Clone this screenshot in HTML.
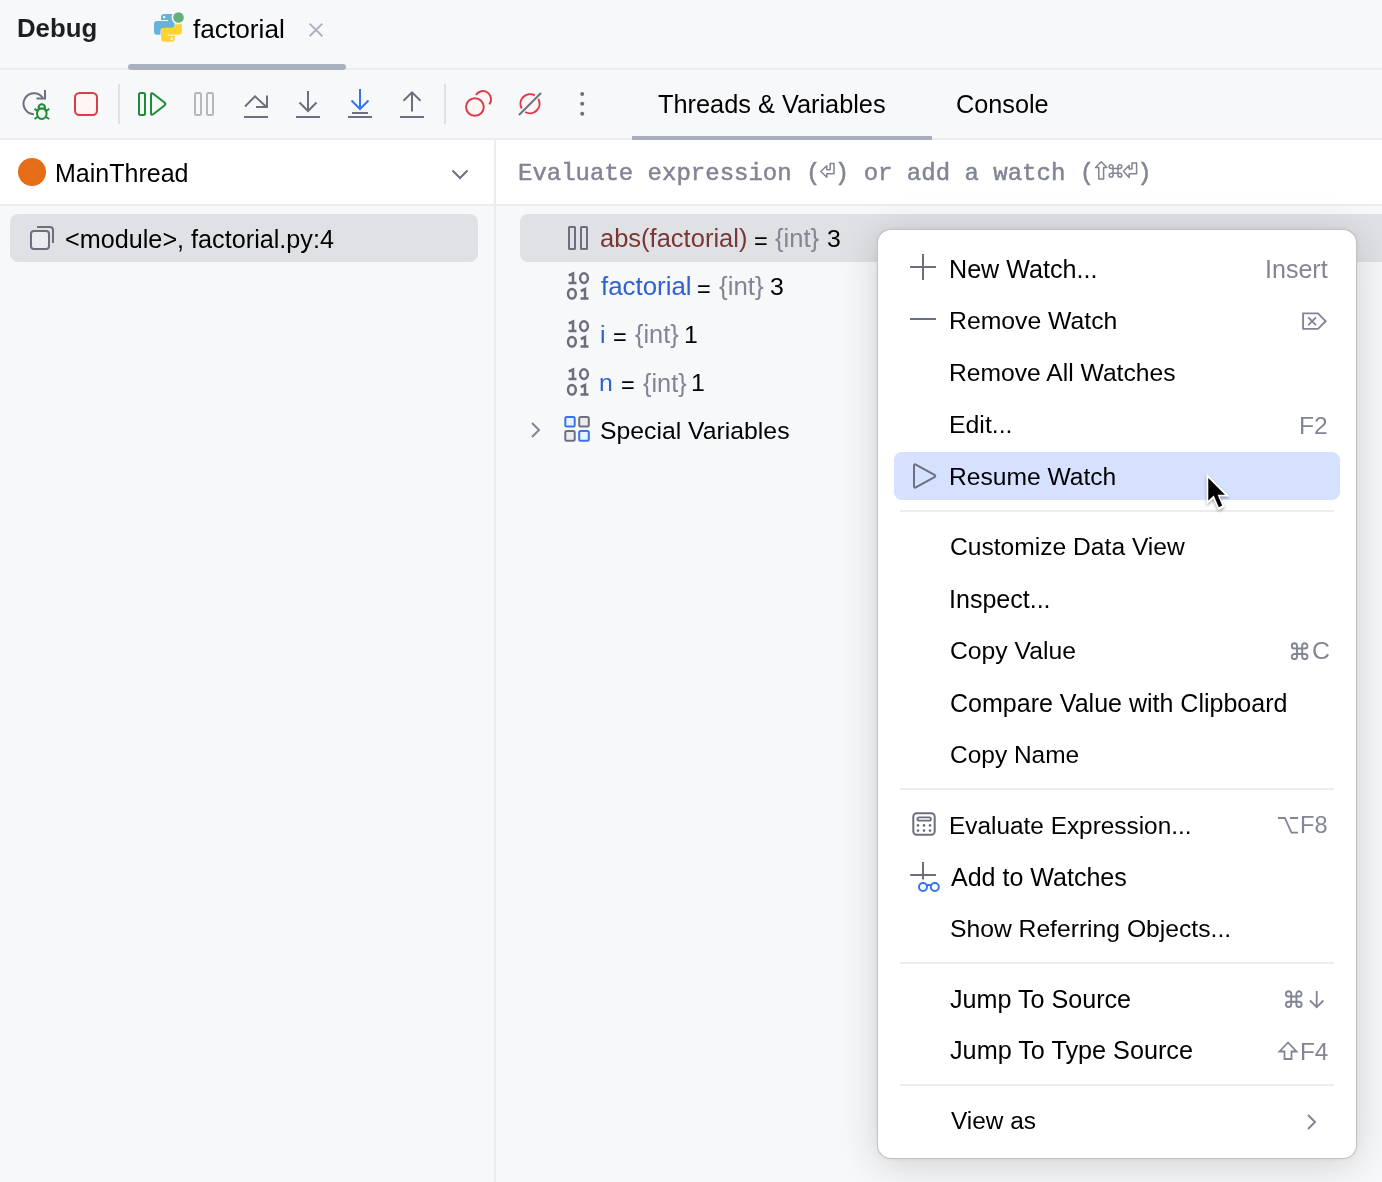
<!DOCTYPE html>
<html><head><meta charset="utf-8">
<style>
html,body{margin:0;padding:0;}
body{width:1382px;height:1182px;overflow:hidden;position:relative;background:#f7f8fa;font-family:"Liberation Sans",sans-serif;color:#000;}
.a{position:absolute;white-space:pre;line-height:1;will-change:transform;}
.b{position:absolute;}
svg.ov{position:absolute;left:0;top:0;}
</style></head>
<body>
<!-- header -->
<div class="b" style="left:0;top:68px;width:1382px;height:2px;background:#ebecf0"></div>
<div class="b" style="left:128px;top:64px;width:218px;height:6px;border-radius:3px;background:#abb0bf"></div>
<!-- toolbar bottom border -->
<div class="b" style="left:0;top:138px;width:1382px;height:2px;background:#ebecf0"></div>
<div class="b" style="left:632px;top:136px;width:300px;height:4px;background:#a8adbd"></div>
<div class="b" style="left:118px;top:84px;width:2px;height:40px;background:#dfe1e5"></div>
<div class="b" style="left:444px;top:84px;width:2px;height:40px;background:#dfe1e5"></div>
<!-- left panel -->
<div class="b" style="left:0;top:140px;width:494px;height:64px;background:#fff"></div>
<div class="b" style="left:0;top:204px;width:494px;height:2px;background:#ebecf0"></div>
<div class="b" style="left:494px;top:140px;width:2px;height:1042px;background:#ebecf0"></div>
<div class="b" style="left:18px;top:158px;width:28px;height:28px;border-radius:50%;background:#e66d17"></div>
<div class="b" style="left:10px;top:214px;width:468px;height:48px;border-radius:8px;background:#dfe1e5"></div>
<!-- right panel -->
<div class="b" style="left:496px;top:140px;width:886px;height:64px;background:#fff"></div>
<div class="b" style="left:496px;top:204px;width:886px;height:2px;background:#ebecf0"></div>
<div class="b" style="left:520px;top:214px;width:880px;height:48px;border-radius:8px;background:#dfe1e5"></div>
<!--TEXT-PRE-->
<!-- popup -->
<div class="b" id="popup" style="left:877px;top:229px;width:478px;height:928px;border-radius:14px;background:#fff;border:1px solid rgba(0,0,0,0.24);box-shadow:0 0 4px rgba(0,0,0,0.06),0 6px 40px rgba(0,0,0,0.16)"></div>
<div class="b" style="left:894px;top:452px;width:446px;height:48px;border-radius:8px;background:#d5e1ff"></div>
<div class="b" style="left:900px;top:510px;width:434px;height:2px;background:#ebecf0"></div>
<div class="b" style="left:900px;top:788px;width:434px;height:2px;background:#ebecf0"></div>
<div class="b" style="left:900px;top:962px;width:434px;height:2px;background:#ebecf0"></div>
<div class="b" style="left:900px;top:1084px;width:434px;height:2px;background:#ebecf0"></div>
<div class="a" id="t0" style="left:16.70px;top:16.46px;font-size:25.79px;color:#1e1f22;font-family:'Liberation Sans',sans-serif;font-weight:700">Debug</div>
<div class="a" id="t1" style="left:192.90px;top:15.99px;font-size:26.23px;color:#000000;font-family:'Liberation Sans',sans-serif;font-weight:400">factorial</div>
<div class="a" id="t2" style="left:658.10px;top:92.25px;font-size:25.33px;color:#000000;font-family:'Liberation Sans',sans-serif;font-weight:400">Threads &amp; Variables</div>
<div class="a" id="t3" style="left:956.10px;top:92.32px;font-size:25.26px;color:#000000;font-family:'Liberation Sans',sans-serif;font-weight:400">Console</div>
<div class="a" id="t4" style="left:55.30px;top:161.21px;font-size:25.02px;color:#000000;font-family:'Liberation Sans',sans-serif;font-weight:400">MainThread</div>
<div class="a" id="t5" style="left:65.10px;top:226.66px;font-size:25.21px;color:#000000;font-family:'Liberation Sans',sans-serif;font-weight:400">&lt;module&gt;, factorial.py:4</div>
<div class="a" id="t6" style="left:599.70px;top:226.30px;font-size:25.51px;color:#7c3535;font-family:'Liberation Sans',sans-serif;font-weight:400">abs(factorial)</div>
<div class="a" id="t7" style="left:754.04px;top:229.50px;font-size:23.50px;color:#000000;font-family:'Liberation Sans',sans-serif;font-weight:400">=</div>
<div class="a" id="t8" style="left:775.30px;top:226.29px;font-size:25.52px;color:#818594;font-family:'Liberation Sans',sans-serif;font-weight:400">{int}</div>
<div class="a" id="t9" style="left:827.01px;top:226.90px;font-size:24.80px;color:#000000;font-family:'Liberation Sans',sans-serif;font-weight:400">3</div>
<div class="a" id="t10" style="left:600.70px;top:273.98px;font-size:25.89px;color:#2e62d1;font-family:'Liberation Sans',sans-serif;font-weight:400">factorial</div>
<div class="a" id="t11" style="left:697.04px;top:277.50px;font-size:23.50px;color:#000000;font-family:'Liberation Sans',sans-serif;font-weight:400">=</div>
<div class="a" id="t12" style="left:718.90px;top:273.99px;font-size:25.88px;color:#818594;font-family:'Liberation Sans',sans-serif;font-weight:400">{int}</div>
<div class="a" id="t13" style="left:770.41px;top:274.90px;font-size:24.80px;color:#000000;font-family:'Liberation Sans',sans-serif;font-weight:400">3</div>
<div class="a" id="t14" style="left:599.95px;top:322.90px;font-size:24.80px;color:#2e62d1;font-family:'Liberation Sans',sans-serif;font-weight:400">i</div>
<div class="a" id="t15" style="left:613.04px;top:325.50px;font-size:23.50px;color:#000000;font-family:'Liberation Sans',sans-serif;font-weight:400">=</div>
<div class="a" id="t16" style="left:634.90px;top:322.48px;font-size:25.30px;color:#818594;font-family:'Liberation Sans',sans-serif;font-weight:400">{int}</div>
<div class="a" id="t17" style="left:683.91px;top:322.90px;font-size:24.80px;color:#000000;font-family:'Liberation Sans',sans-serif;font-weight:400">1</div>
<div class="a" id="t18" style="left:599.41px;top:371.10px;font-size:24.80px;color:#2e62d1;font-family:'Liberation Sans',sans-serif;font-weight:400">n</div>
<div class="a" id="t19" style="left:621.24px;top:373.70px;font-size:23.50px;color:#000000;font-family:'Liberation Sans',sans-serif;font-weight:400">=</div>
<div class="a" id="t20" style="left:643.10px;top:370.68px;font-size:25.30px;color:#818594;font-family:'Liberation Sans',sans-serif;font-weight:400">{int}</div>
<div class="a" id="t21" style="left:691.31px;top:371.10px;font-size:24.80px;color:#000000;font-family:'Liberation Sans',sans-serif;font-weight:400">1</div>
<div class="a" id="t22" style="left:600.10px;top:419.12px;font-size:24.78px;color:#000000;font-family:'Liberation Sans',sans-serif;font-weight:400">Special Variables</div>
<div class="a" id="t23" style="left:949.10px;top:257.02px;font-size:25.14px;color:#000000;font-family:'Liberation Sans',sans-serif;font-weight:400">New Watch...</div>
<div class="a" id="t24" style="left:949.10px;top:309.31px;font-size:24.78px;color:#000000;font-family:'Liberation Sans',sans-serif;font-weight:400">Remove Watch</div>
<div class="a" id="t25" style="left:949.10px;top:361.42px;font-size:24.66px;color:#000000;font-family:'Liberation Sans',sans-serif;font-weight:400">Remove All Watches</div>
<div class="a" id="t26" style="left:949.10px;top:413.27px;font-size:24.84px;color:#000000;font-family:'Liberation Sans',sans-serif;font-weight:400">Edit...</div>
<div class="a" id="t27" style="left:949.10px;top:465.46px;font-size:24.61px;color:#000000;font-family:'Liberation Sans',sans-serif;font-weight:400">Resume Watch</div>
<div class="a" id="t28" style="left:950.10px;top:534.95px;font-size:24.62px;color:#000000;font-family:'Liberation Sans',sans-serif;font-weight:400">Customize Data View</div>
<div class="a" id="t29" style="left:949.10px;top:587.10px;font-size:25.04px;color:#000000;font-family:'Liberation Sans',sans-serif;font-weight:400">Inspect...</div>
<div class="a" id="t30" style="left:950.10px;top:638.86px;font-size:24.73px;color:#000000;font-family:'Liberation Sans',sans-serif;font-weight:400">Copy Value</div>
<div class="a" id="t31" style="left:950.10px;top:690.92px;font-size:25.02px;color:#000000;font-family:'Liberation Sans',sans-serif;font-weight:400">Compare Value with Clipboard</div>
<div class="a" id="t32" style="left:950.10px;top:743.08px;font-size:24.48px;color:#000000;font-family:'Liberation Sans',sans-serif;font-weight:400">Copy Name</div>
<div class="a" id="t33" style="left:949.10px;top:813.65px;font-size:24.39px;color:#000000;font-family:'Liberation Sans',sans-serif;font-weight:400">Evaluate Expression...</div>
<div class="a" id="t34" style="left:951.10px;top:865.10px;font-size:25.04px;color:#000000;font-family:'Liberation Sans',sans-serif;font-weight:400">Add to Watches</div>
<div class="a" id="t35" style="left:950.10px;top:917.40px;font-size:24.68px;color:#000000;font-family:'Liberation Sans',sans-serif;font-weight:400">Show Referring Objects...</div>
<div class="a" id="t36" style="left:950.10px;top:986.51px;font-size:25.14px;color:#000000;font-family:'Liberation Sans',sans-serif;font-weight:400">Jump To Source</div>
<div class="a" id="t37" style="left:950.10px;top:1038.44px;font-size:25.22px;color:#000000;font-family:'Liberation Sans',sans-serif;font-weight:400">Jump To Type Source</div>
<div class="a" id="t38" style="left:951.10px;top:1109.13px;font-size:24.41px;color:#000000;font-family:'Liberation Sans',sans-serif;font-weight:400">View as</div>
<div class="a" id="t39" style="left:1265.30px;top:257.07px;font-size:25.07px;color:#818594;font-family:'Liberation Sans',sans-serif;font-weight:400">Insert</div>
<div class="a" id="t40" style="left:1299.10px;top:413.51px;font-size:24.55px;color:#818594;font-family:'Liberation Sans',sans-serif;font-weight:400">F2</div>
<div class="a" id="t41" style="left:1311.85px;top:639.30px;font-size:24.80px;color:#818594;font-family:'Liberation Sans',sans-serif;font-weight:400">C</div>
<div class="a" id="t42" style="left:1300.30px;top:814.04px;font-size:23.57px;color:#818594;font-family:'Liberation Sans',sans-serif;font-weight:400">F8</div>
<div class="a" id="t43" style="left:1299.70px;top:1039.58px;font-size:24.24px;color:#818594;font-family:'Liberation Sans',sans-serif;font-weight:400">F4</div>
<div class="a" id="t44" style="left:517.65px;top:161.51px;font-size:24.00px;color:#818594;font-family:'Liberation Mono',monospace;font-weight:400;-webkit-text-stroke:0.5px #818594">Evaluate expression ( ) or add a watch (   )</div>
<svg class="ov" width="1382" height="1182" viewBox="0 0 1382 1182" fill="none" stroke-width="2">
<!-- python icon -->
<g>
<path id="py" d="M161,17 Q161,14 164,14 H171.7 Q174.7,14 174.7,17 V25 Q174.7,28 171.7,28 H163.5 Q160.5,28 160.5,31 V34.7 H157 Q154,34.7 154,31.7 V24 Q154,21 157,21 H168 V20 H161 Z" fill="#69b1d9" stroke="none"/>
<path d="M161,17 Q161,14 164,14 H171.7 Q174.7,14 174.7,17 V25 Q174.7,28 171.7,28 H163.5 Q160.5,28 160.5,31 V34.7 H157 Q154,34.7 154,31.7 V24 Q154,21 157,21 H168 V20 H161 Z" fill="#fed434" stroke="none" transform="rotate(180 167.9 27.9)"/>
<circle cx="164.1" cy="17.1" r="1.2" fill="#fff" stroke="none"/>
<circle cx="171.7" cy="38.7" r="1.2" fill="#fff" stroke="none"/>
<circle cx="178.5" cy="17.5" r="6.1" fill="#65b07a" stroke="#f7f8fa" stroke-width="1.6"/>
</g>
<!-- close x -->
<path d="M309.6,23.6 L322.3,36.3 M322.3,23.6 L309.6,36.3" stroke="#aeb3c2" stroke-width="2"/>

<!-- toolbar: rerun -->
<path d="M33.9,114.2 A10.5,10.5 0 1 1 42.6,97.6" stroke="#6c707e"/>
<path d="M36.5,98.5 H45 V90" stroke="#6c707e"/>
<g stroke="#208a3c">
<ellipse cx="41.8" cy="113.6" rx="4.8" ry="5.4" fill="#ecf7ee"/>
<path d="M38.6,108.6 V107.5 A3.2,3.2 0 0 1 45,107.5 V108.6 Z" fill="#ecf7ee"/>
<path d="M34.5,108.8 L37.6,110.8 M49.2,108.8 L46.1,110.8 M34.5,119 L37.6,117 M49.2,119 L46.1,117"/>
</g>
<!-- stop -->
<rect x="75" y="93" width="22" height="22" rx="4.5" stroke="#db3b4b" fill="#fff5f5"/>
<!-- resume -->
<rect x="139" y="93" width="6" height="22" rx="1.5" stroke="#208a3c" fill="#f2fbf3"/>
<path d="M151,95 Q151,92 153.5,94 L164.5,102.5 Q166,104 164.5,105.5 L153.5,114 Q151,116 151,113 Z" stroke="#208a3c" fill="#f2fbf3" stroke-linejoin="round"/>
<!-- pause (disabled) -->
<rect x="195" y="93" width="6" height="22" rx="1.5" stroke="#b8b8b8"/>
<rect x="207" y="93" width="6" height="22" rx="1.5" stroke="#b8b8b8"/>
<!-- step over -->
<g stroke="#6c707e">
<path d="M245,106.5 L255,96.3 L266.5,107"/>
<path d="M256,107 H267 V95.5"/>
<path d="M244,117 H268"/>
</g>
<!-- step into -->
<g stroke="#6c707e">
<path d="M308,91 V111"/>
<path d="M299.5,102.5 L308,111 L316.5,102.5"/>
<path d="M296,117 H320"/>
</g>
<!-- step into my code -->
<g stroke="#3574f0">
<path d="M360,89 V109"/>
<path d="M351.5,100.5 L360,109 L368.5,100.5"/>
</g>
<path d="M352,113 H368 M348,117 H372" stroke="#6c707e"/>
<!-- step out -->
<g stroke="#6c707e">
<path d="M412,92.5 V111.5"/>
<path d="M403.5,100.8 L412,92.3 L420.5,100.8"/>
<path d="M400,117 H424"/>
</g>
<!-- view breakpoints -->
<g stroke="#db3b4b" fill="#fff5f5">
<path d="M475.9,94.9 A8.2,8.2 0 1 1 489.3,104.3"/>
<circle cx="474.9" cy="107" r="8.85"/>
</g>
<!-- mute breakpoints -->
<circle cx="530" cy="103.7" r="9.6" fill="#fff5f5" stroke="none"/>
<path d="M534.8,95.4 A9.6,9.6 0 0 0 521.7,108.5 M525.2,112 A9.6,9.6 0 0 0 538.3,98.9" stroke="#db3b4b"/>
<path d="M519,115 L541,93" stroke="#6c707e"/>
<!-- more -->
<g fill="#6c707e" stroke="none">
<circle cx="582.2" cy="94" r="2"/>
<circle cx="582.2" cy="103.8" r="2"/>
<circle cx="582.2" cy="113.7" r="2"/>
</g>
<!-- main thread chevron -->
<path d="M452.5,170.5 L460,178 L467.5,170.5" stroke="#6c707e"/>
<!-- frame icon -->
<g stroke="#6c707e">
<rect x="31" y="231" width="18" height="18" rx="3" fill="#ebecf0"/>
<path d="M37,227 H50 Q53,227 53,230 V243"/>
</g>
<!-- watch icon (two bars) -->
<g stroke="#6c707e">
<rect x="569" y="227" width="6" height="22" rx="0.5"/>
<rect x="581" y="227" width="6" height="22" rx="0.5"/>
</g>
<!-- 1001 icons -->
<g id="bin" stroke="#6c707e" stroke-width="2.5">
<path d="M568.8,275.5 L573,273.5 V283 M568.5,283 H576.5"/>
<ellipse cx="584" cy="278.1" rx="3.9" ry="4.8"/>
<ellipse cx="571.9" cy="293.8" rx="3.9" ry="4.8"/>
<path d="M580.8,291 L585,289 V298.5 M580.5,298.5 H588.5"/>
</g>
<use href="#bin" transform="translate(0 48)"/>
<use href="#bin" transform="translate(0 96)"/>
<!-- special variables -->
<path d="M532,423 L539,430 L532,437" stroke="#818594"/>
<rect x="565.3" y="417" width="9.4" height="9.6" rx="1.5" stroke="#3574f0" fill="#ebf1fe"/>
<rect x="579.2" y="417" width="9.6" height="9.6" rx="1.5" stroke="#6c707e" fill="#ebecf0"/>
<rect x="565.3" y="431" width="9.4" height="9.8" rx="1.5" stroke="#6c707e" fill="#ebecf0"/>
<rect x="579.2" y="431" width="9.6" height="9.8" rx="1.5" stroke="#3574f0" fill="#ebf1fe"/>

<!-- evaluate placeholder symbols -->
<g stroke="#818594" stroke-width="1.5" stroke-linejoin="round">
<path d="M820.8,171.5 L826.8,165.8 V169.8 H830.2 V163.5 H834 V173.8 H826.8 V177.2 Z"/>
<path d="M1101.2,161.8 L1095.5,167.5 H1098.8 V179 H1103.6 V167.5 H1106.9 Z"/>
<path d="M1113.00,166.60 V175.20 M1118.00,166.60 V175.20 M1111.10,168.50 H1119.90 M1111.10,173.30 H1119.90 M1113.00,166.60 A1.9,1.9 0 1 0 1111.10,168.50 M1118.00,166.60 A1.9,1.9 0 1 1 1119.90,168.50 M1113.00,175.20 A1.9,1.9 0 1 1 1111.10,173.30 M1118.00,175.20 A1.9,1.9 0 1 0 1119.90,173.30"/>
<path d="M1123.4,171.3 L1129.2,165.5 V169 H1132 V163 H1136.6 V173.8 H1129.2 V177.6 Z"/>
</g>
<!-- menu icons -->
<path d="M923,254 V280 M910,267 H936" stroke="#6c707e"/>
<path d="M910,319 H936" stroke="#6c707e"/>
<path d="M914,466 Q914,463.5 916.2,464.8 L934.5,474.8 Q936,476 934.5,477.2 L916.2,487.2 Q914,488.5 914,486 Z" stroke="#6c707e" stroke-linejoin="round"/>
<g stroke="#6c707e">
<rect x="913.3" y="813.3" width="21.4" height="21.4" rx="3.5"/>
<rect x="917.5" y="817.3" width="13.4" height="3.4" rx="1.7" stroke-width="1.8"/>
</g>
<g fill="#6c707e" stroke="none">
<circle cx="918" cy="825.4" r="1.3"/><circle cx="924" cy="825.4" r="1.3"/><circle cx="930" cy="825.4" r="1.3"/>
<circle cx="918" cy="830.6" r="1.3"/><circle cx="924" cy="830.6" r="1.3"/><circle cx="930" cy="830.6" r="1.3"/>
</g>
<path d="M923,862 V879.5 M910.2,875 H936" stroke="#6c707e"/>
<g stroke="#3574f0">
<circle cx="923" cy="887" r="4"/>
<circle cx="934.8" cy="887" r="4"/>
<path d="M927,885 H930.8"/>
</g>
<!-- shortcuts -->
<!-- delete forward -->
<path d="M1303.1,313.4 H1318 L1325.6,321.2 L1318,328.9 H1303.1 Z M1308.2,317.3 L1316,325.2 M1316,317.3 L1308.2,325.2" stroke="#818594" stroke-width="1.9" stroke-linejoin="miter"/>
<!-- cmd C -->
<path d="M1297.00,645.90 V656.60 M1302.20,645.90 V656.60 M1294.40,648.50 H1304.80 M1294.40,654.00 H1304.80 M1297.00,645.90 A2.6,2.6 0 1 0 1294.40,648.50 M1302.20,645.90 A2.6,2.6 0 1 1 1304.80,648.50 M1297.00,656.60 A2.6,2.6 0 1 1 1294.40,654.00 M1302.20,656.60 A2.6,2.6 0 1 0 1304.80,654.00" stroke="#818594" stroke-width="1.9"/>
<!-- option -->
<path d="M1278,818 H1284.8 L1291.5,832.7 H1298 M1290,818 H1298" stroke="#818594" stroke-width="1.8"/>
<!-- cmd down -->
<path d="M1291.20,993.90 V1004.40 M1296.40,993.90 V1004.40 M1288.60,996.50 H1299.00 M1288.60,1001.80 H1299.00 M1291.20,993.90 A2.6,2.6 0 1 0 1288.60,996.50 M1296.40,993.90 A2.6,2.6 0 1 1 1299.00,996.50 M1291.20,1004.40 A2.6,2.6 0 1 1 1288.60,1001.80 M1296.40,1004.40 A2.6,2.6 0 1 0 1299.00,1001.80" stroke="#818594" stroke-width="1.9"/>
<path d="M1316.7,991 V1007 M1310,1000.5 L1316.7,1007.2 L1323.4,1000.5" stroke="#818594" stroke-width="1.8"/>
<!-- shift -->
<path d="M1288,1042.5 L1279.5,1051.5 H1284.5 V1059 H1291.5 V1051.5 H1296.5 Z" stroke="#818594" stroke-width="1.8" stroke-linejoin="miter"/>
<!-- view as chevron -->
<path d="M1308,1115 L1315,1122 L1308,1129" stroke="#818594"/>
<!-- cursor -->
<defs><filter id="cs" x="-50%" y="-50%" width="200%" height="200%"><feGaussianBlur stdDeviation="1.6"/></filter></defs>
<path d="M1206.5,475 V506 L1213.2,500.3 L1218.4,511.5 L1224.6,508.5 L1219.6,498.1 H1229.8 Z" fill="rgba(0,0,0,0.35)" stroke="none" filter="url(#cs)"/>
<path d="M1206.5,473.5 V504.5 L1213.2,498.8 L1218.4,510 L1224.6,507 L1219.6,496.6 H1229.8 Z" fill="#fff" stroke="none"/>
<path d="M1208.3,478 V500.5 L1213.8,495.6 L1218.8,507.2 L1222.2,505.6 L1217.6,494.8 H1225 Z" fill="#000" stroke="none"/>
</svg>

</body></html>
